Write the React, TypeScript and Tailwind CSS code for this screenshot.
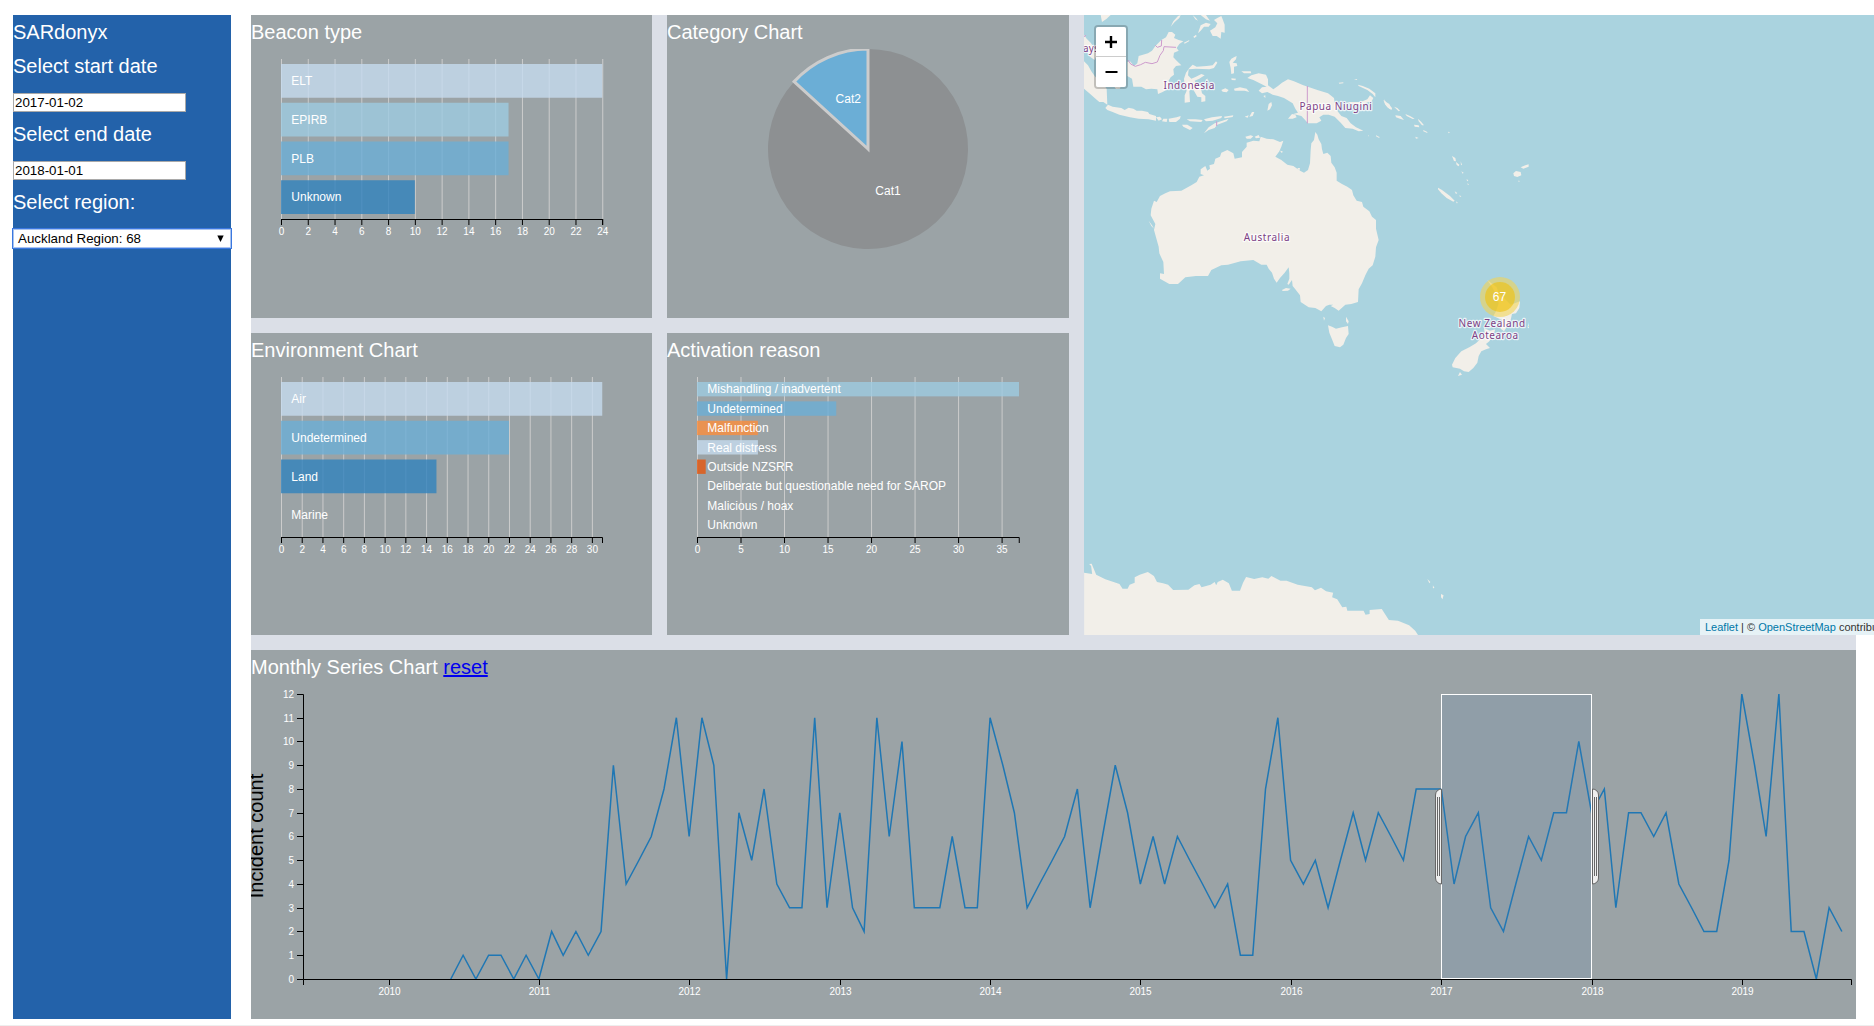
import React from "react";

type Row = { label: string; value: number; color: string };

const FONT = "font-['Liberation_Sans',Arial,sans-serif]";

function Title({ children }: { children: React.ReactNode }) {
  return <div className="h-[34px] pt-[3px] text-xl leading-7 whitespace-nowrap text-white">{children}</div>;
}

function Panel({ title, className, children }: { title: React.ReactNode; className?: string; children: React.ReactNode }) {
  return (
    <section className={"overflow-hidden bg-[#9ba3a6] " + (className ?? "")}>
      <Title>{title}</Title>
      {children}
    </section>
  );
}

function RowChart({ rows, max, step, width = 321.25 }: { rows: Row[]; max: number; step: number; width?: number }) {
  const height = 160;
  const gap = 5;
  const rowHeight = (height - gap * (rows.length + 1)) / rows.length;
  const ticks: number[] = [];
  for (let t = 0; t <= max; t += step) ticks.push(t);
  const x = (v: number) => (v / max) * width;
  return (
    <svg width="401" height="200" className="block">
      <g transform="translate(30,10)">
        {ticks.map((t) => (
          <g key={t} transform={`translate(${x(t) + 0.5},${height})`}>
            <line y2="6" stroke="#000" />
            <line y2={-height} stroke="#ccc" />
            <text y="16.3" textAnchor="middle" fontSize="10" fill="#fff">{t}</text>
          </g>
        ))}
        <path d={`M0.5,166V160.5H${width + 0.25}V166`} fill="none" stroke="#000" />
        {rows.map((r, i) => (
          <g key={r.label} transform={`translate(0,${gap + i * (rowHeight + gap)})`}>
            <rect width={x(r.value)} height={rowHeight} fill={r.color} fillOpacity="0.8" />
            <text x="10.3" y={rowHeight / 2 + 4.2} fontSize="12" fill="#fff">{r.label}</text>
          </g>
        ))}
      </g>
    </svg>
  );
}

function PieChart() {
  const a = (9 / 68) * Math.PI * 2;
  const px = 201 - 100 * Math.sin(a);
  const py = 100 - 100 * Math.cos(a);
  return (
    <svg width="402" height="200" className="block">
      <path d={`M201,100V0A100,100 0 1 1 ${px},${py}Z`} fill="#8d9092" />
      <path d={`M201,100L${px},${py}A100,100 0 0 1 201,0Z`} fill="#6baed6" stroke="#ccc" strokeWidth="3" />
      <text x="221" y="145.7" textAnchor="middle" fontSize="12" fill="#fff">Cat1</text>
      <text x="181.3" y="54.3" textAnchor="middle" fontSize="12" fill="#fff">Cat2</text>
    </svg>
  );
}

/* Monthly incident counts, June 2010 to September 2019. */
const SERIES = [
  0, 1, 0, 1, 1, 0, 1,
  0, 2, 1, 2, 1, 2, 9, 4, 5, 6, 8, 11,
  6, 11, 9, 0, 7, 5, 8, 4, 3, 3, 11, 3,
  7, 3, 2, 11, 6, 10, 3, 3, 3, 6, 3, 3,
  11, 9, 7, 3, 4, 5, 6, 8, 3, 6, 9, 7,
  4, 6, 4, 6, 5, 4, 3, 4, 1, 1, 8, 11,
  5, 4, 5, 3, 5, 7, 5, 7, 6, 5, 8, 8,
  8, 4, 6, 7, 3, 2, 4, 6, 5, 7, 7, 10,
  7, 8, 3, 7, 7, 6, 7, 4, 3, 2, 2, 5,
  12, 9, 6, 12, 2, 2, 0, 3, 2,
];

const DAY = 86400000;
const timeX = (year: number, month: number) =>
  85.6 + ((Date.UTC(year, month, 1) - Date.UTC(2010, 0, 1)) / DAY) * 0.41169;

function Handle({ x, side }: { x: number; side: 1 | -1 }) {
  const s = side;
  return (
    <path
      transform={`translate(${x},0)`}
      d={`M${0.5 * s},95A6,6 0 0 ${s === 1 ? 1 : 0} ${6.5 * s},101V184A6,6 0 0 ${s === 1 ? 1 : 0} ${0.5 * s},190ZM${2.5 * s},103V182M${4.5 * s},103V182`}
      fill="#eee"
      stroke="#666"
    />
  );
}

function SeriesChart() {
  const y = (v: number) => 285 - v * 23.75;
  const points = SERIES.map((v, i) => `${timeX(2010, 5 + i).toFixed(2)},${y(v)}`).join(" ");
  return (
    <svg width="1605" height="335" className="block">
      <text transform="translate(12,152) rotate(-90)" textAnchor="middle" fontSize="20" fill="#000">Incident count</text>
      <g transform="translate(52,10)">
        <path d="M-6,0.5H0.5V285.5H-6" fill="none" stroke="#000" />
        {Array.from({ length: 13 }, (_, v) => (
          <g key={v} transform={`translate(0,${Math.round(y(v) - 0.01) + 0.5})`}>
            <line x2="-6" stroke="#000" />
            <text x="-9" y="3.5" textAnchor="end" fontSize="10" fill="#fff">{v}</text>
          </g>
        ))}
        <path d="M0.5,291V285.5H1548.5V291" fill="none" stroke="#000" />
        {Array.from({ length: 10 }, (_, i) => (
          <g key={i} transform={`translate(${Math.round(timeX(2010 + i, 0)) + 0.5},285)`}>
            <line y2="6" stroke="#000" />
            <text y="16.3" textAnchor="middle" fontSize="10" fill="#fff">{2010 + i}</text>
          </g>
        ))}
        <clipPath id="plot"><rect width="1549" height="285" /></clipPath>
        <polyline clipPath="url(#plot)" points={points} fill="none" stroke="#1f77b4" strokeWidth="1.5" />
        <rect x="1138.5" y="0.5" width="150" height="284" fill="#4682b4" fillOpacity="0.125" stroke="#fff" />
        <Handle x={1139} side={-1} />
        <Handle x={1289} side={1} />
      </g>
    </svg>
  );
}

function Label({ x, y, w, children }: { x: number; y: number; w: number; children: string }) {
  return (
    <text x={x} y={y} textLength={w} fontSize="10" fontFamily="Noto Sans, sans-serif" fill="#7d3f85"
      stroke="#fff" strokeOpacity="0.75" strokeWidth="2.4" strokeLinejoin="round" paintOrder="stroke">
      {children}
    </text>
  );
}

function MapView() {
  return (
    <div className="relative h-[620px] w-[790px] overflow-hidden bg-[#aad3df]">
      <svg width="790" height="620" className="block" fill="#f2efe9">
        <g transform="translate(-4,-5) scale(0.33333)">
          {/* Malay peninsula and Sumatra */}
          <path d="M12,74L20,86L32,98L42,112L50,136L44,150L30,140L20,120L12,110Z" />
          <path d="M12,154L24,166L34,184L44,198L58,214L72,226L80,236L82,284L70,276L58,276L44,264L28,250L12,236Z" />
          <path d="M104,232L112,226L122,228L120,236L108,237ZM62,15H92L80,26L66,36Z" />
          {/* Java */}
          <path d="M76,294L84,284L98,290L124,294L134,300L146,293L160,296L170,302L186,302L204,306L208,312L228,318V332L206,328L176,326L150,322L118,314L98,306L82,300Z" />
          <path d="M228,322L240,320L246,328L236,332ZM250,326L262,326L260,336L246,334ZM266,326L290,322L302,318L300,326L288,336L268,336ZM306,344L322,344L338,354L330,360L310,350ZM320,328L346,328L368,330L364,336L330,334ZM372,328L396,322L426,318L424,324L398,332L378,334ZM372,370L386,352L404,340L446,326L440,334L412,344L404,354L386,360ZM432,320L460,316L458,321L434,325ZM508,320L516,306L523,306L518,318ZM494,320L506,316L503,323Z" />
          {/* Borneo */}
          <path d="M142,156L150,154L162,168L172,160L176,138L204,130L216,122L226,108L244,90L258,82L266,66L276,66L286,74L282,84L296,90L310,94L298,102L290,114L296,122L282,128L280,142L290,152L304,166L288,168L280,178L282,194L272,202L266,212L272,226L262,238L248,246L234,252L232,238L214,236L198,238L184,230L160,230L156,206L142,198Z" />
          {/* Philippines */}
          <path d="M272,50L280,34L294,18L302,15L298,24L284,36ZM354,70L362,46L378,38L392,42L386,50L372,50L362,62ZM390,62L406,52L412,40L402,30L412,24L424,18L428,28L434,44L434,68L424,66L422,86L410,78L398,78ZM338,15L348,24L354,32L346,28ZM362,15L378,28L390,32L384,24L378,15ZM312,98L328,90L327,94L314,101ZM340,80L348,74L350,79L343,84Z" />
          {/* Sulawesi */}
          <path d="M312,206L318,188L328,174L338,164L350,170L380,168L398,166L408,154L412,158L402,174L388,178L348,176L326,178L324,196L334,206L348,200L364,192L374,196L358,206L344,212L348,220L362,230L366,250L376,258L376,274L364,276L364,262L352,260L344,246L338,236L328,242L330,276L314,278L314,256L320,242L314,228Z" />
          {/* Maluku */}
          <path d="M448,156L454,146L462,142L470,138L468,148L458,158L470,160L472,168L462,170L462,190L454,192L452,174ZM424,240L436,235L446,240L440,247L428,245ZM462,236L480,232L500,236L508,246L494,242L476,242L464,242ZM454,205L468,206L466,211L455,210ZM484,184L512,184L514,190L492,190ZM562,302L566,282L574,276L576,286L570,298ZM376,208L384,206L382,211ZM550,258L556,256L556,264Z" />
          {/* New Guinea */}
          <path d="M502,204L514,196L536,190L558,194L564,208L564,226L580,238L594,228L606,218L624,208L642,214L670,226L712,240L744,250L762,264L764,278L778,282L770,300L784,318L800,324L812,340L828,352L850,362L836,364L818,356L796,354L782,338L764,320L746,314L730,314L718,322L724,332L710,340L684,340L672,326L664,318L640,312L654,308L646,296L638,280L612,264L594,258L578,254L562,246L546,250L536,242L546,232L560,230L544,222L520,210ZM624,326L636,312L646,314L650,322L638,326Z" />
          <path d="M800,276L820,276L842,276L862,268L870,256L880,264L876,272L860,278L844,286L816,282ZM834,224L848,228L868,236L886,250L886,262L878,252L862,240L836,228ZM776,218L790,217L790,220L778,221ZM822,208L832,207L830,210ZM912,268L918,276L928,282L936,298L928,296L916,284ZM942,290L952,294L960,302L956,304ZM946,316L962,318L972,330L960,326L948,322ZM976,312L990,318L1004,326L998,327L980,318ZM1002,344L1016,346L1018,352L1004,350ZM1014,326L1024,336L1032,346L1026,346L1016,334ZM1030,360L1042,366L1042,369L1030,364ZM888,376L900,382L896,383L888,379ZM1006,380L1016,384L1008,386ZM864,376L868,378L865,379Z" />
          {/* Melanesia */}
          <path d="M1104,365L1110,367L1106,370ZM1116,438L1126,444L1128,454L1122,453ZM1128,456L1138,464L1136,469L1130,465ZM1142,454L1146,464L1143,466ZM1144,484L1151,488L1148,491ZM1160,506L1165,512L1161,514ZM1163,519L1167,525L1163,524ZM1074,533L1086,540L1110,558L1124,572L1120,575L1100,564L1084,550L1074,538ZM1124,544L1132,549L1128,552ZM1138,556L1144,559L1140,561ZM1128,574L1134,579L1130,580Z" />
          {/* Australia */}
          <path d="M706,366L712,374L716,388L724,402L726,418L730,432L742,428L752,438L754,458L764,472L770,488L770,512L786,522L802,530L816,540L820,556L830,572L846,576L850,590L868,604L876,620L888,630L888,656L896,690L888,712L886,740L878,766L866,776L856,796L846,820L836,838L834,876L814,882L796,884L776,902L764,894L752,888L760,884L748,884L738,888L724,904L706,894L686,892L662,876L660,856L646,838L638,828L636,810L626,824L622,822L628,806L628,790L626,772L614,788L600,804L590,818L582,806L576,788L566,776L560,764L544,764L520,750L482,754L444,764L424,766L394,780L384,798L348,798L316,802L294,822L268,822L240,806L240,790L252,792L250,756L238,730L236,710L228,682L222,660L226,642L212,616L214,596L222,572L230,576L240,558L256,550L270,544L304,542L334,526L350,516L358,500L372,496L362,492L362,478L376,468L382,482L390,476L388,466L402,462L406,446L420,440L424,428L442,420L460,430L464,446L486,442L486,426L500,410L500,398L520,392L538,394L542,380L560,386L580,388L600,396L610,392L604,410L598,424L586,440L604,450L622,464L640,468L660,482L672,488L684,480L690,460L692,420L694,400L702,390Z" />
          <path d="M496,380L512,376L520,379L512,386L500,386ZM524,380L536,375L540,383L528,385ZM606,840L618,834L632,836L624,842L608,843ZM730,920L735,924L732,932ZM798,920L806,934L804,942L798,934ZM744,946L756,950L768,956L786,952L804,948L806,972L798,984L790,1004L780,1012L764,1008L756,988L748,968ZM652,474L660,474L658,484ZM600,422L608,424L606,430ZM206,632L214,648L222,656L216,646Z" />
          <path
            d="M144,150L152,162L166,169L182,164L196,157L216,161L232,156L240,136L250,122L252,110L288,112M226,106L232,112L244,108L245,90M12,80L18,76M410,334V348M682,228V340"
            fill="none"
            stroke="#cd9bcd"
            strokeWidth="3"
          />
        </g>
        <g transform="translate(296,85) scale(0.33333)">
          {/* New Zealand and Fiji */}
          <path d="M322,540L332,548L350,562L356,580L378,600L392,614L420,604L418,624L408,640L396,642L392,660L384,676L372,694L362,686L366,660L340,648L348,634L356,610L350,586L336,560Z" />
          <path d="M312,684L330,692L346,688L340,704L328,724L318,732L330,744L318,748L304,754L296,768L292,788L280,804L266,816L252,814L240,806L218,802L216,794L226,774L244,754L268,742L288,730L304,714L314,700ZM234,828L240,816L246,824ZM400,220L408,213L422,216L424,226L412,231L402,228ZM422,202L436,196L446,193L446,200L430,206ZM414,242L421,243L416,245Z" />
          <path d="M10,0L26,14L36,24L34,30L22,22L14,10Z" />
        </g>
        <g transform="translate(-4,515) scale(0.50632,0.33333)">
          {/* Antarctica */}
          <path d="M8,128L24,132L22,108L18,102L23,101L32,134L50,148L78,162L84,176L94,176L98,164L108,158L108,142L118,134L134,126L146,138L152,156L164,160L174,164L184,180L214,179L226,166L236,162L240,172L258,164L266,156L269,166L272,156L282,149L294,160L300,182L316,182L322,158L328,141L344,147L360,142L372,146L378,138L396,152L408,152L430,164L458,172L464,181L476,173L486,184L500,188L498,202L508,208L518,232L526,230L528,242L546,242L560,242L564,254L572,252L572,240L596,237L610,270L628,272L650,286L662,302L668,316H8ZM686,147L692,156L690,160ZM697,166L700,174L697,175ZM713,192L718,196L716,208L713,202Z" />
        </g>
        <Label x={79.5} y={74} w={50.8}>Indonesia</Label>
        <Label x={215.5} y={95.3} w={72.3}>Papua Niugini</Label>
        <Label x={159.8} y={226.2} w={45.7}>Australia</Label>
        <Label x={-1} y={37.3} w={16}>ays</Label>
        <clipPath id="tile"><rect width="445" height="620" /></clipPath>
        <g clipPath="url(#tile)">
          <Label x={374.5} y={312.4} w={74}>New Zealand /</Label>
          <Label x={387.8} y={324.2} w={46.4}>Aotearoa</Label>
        </g>
      </svg>

      <div className="absolute top-[262px] left-[396px] size-10 rounded-full bg-[#f1d357]/60 p-[5px]">
        <div className="size-[30px] rounded-full bg-[#f0c20c]/60 pr-px text-center text-xs leading-[30px] text-white">67</div>
      </div>

      <div className="absolute top-[10px] left-[10px] w-[34px] overflow-hidden rounded border-2 border-black/20 bg-clip-padding">
        <button className="block h-[30px] w-full border-b border-[#ccc] bg-white">
          <svg width="30" height="29" className="block" stroke="#000" strokeWidth="2.4"><path d="M9,15H21M15,9V21" /></svg>
        </button>
        <button className="block h-[30px] w-full bg-white">
          <svg width="30" height="30" className="block" stroke="#000" strokeWidth="2.2"><path d="M9.5,15H21.5" /></svg>
        </button>
      </div>

      <div className="absolute top-[604px] left-[616px] h-4 bg-white/70 px-[5px] text-[11px] leading-4 whitespace-nowrap text-[#333]">
        <a className="text-[#0078a8]">Leaflet</a> | © <a className="text-[#0078a8]">OpenStreetMap</a> contributors
      </div>
    </div>
  );
}

function DateField({ label, value }: { label: string; value: string }) {
  return (
    <div className="mb-[5px]">
      <Title>{label}</Title>
      <input
        readOnly
        value={value}
        className="mt-[10px] block h-[19px] w-[173px] border border-[#a9a9a9] bg-white px-px text-[13.33px] leading-[17px] text-black outline-none"
      />
    </div>
  );
}

export default function App() {
  return (
    <div className={"flex h-[1026px] w-full flex-col justify-between overflow-hidden bg-white pt-[15px] " + FONT}>
      <div className="flex h-[1004px] shrink-0 gap-5 pl-[13px]">
        <aside className="w-[218px] shrink-0 bg-[#2362aa]">
          <Title>SARdonyx</Title>
          <DateField label="Select start date" value="2017-01-02" />
          <DateField label="Select end date" value="2018-01-01" />
          <Title>Select region:</Title>
          <div className="mt-[10px] flex h-[19px] items-center justify-between border border-[#a9c3ee] bg-white pr-[6px] pl-1 text-[13.33px] leading-[17px] text-black ring-1 ring-[#3b78e0]">
            <span>Auckland Region: 68</span>
            <svg width="7" height="7" className="mb-px"><path d="M0.3,0.5H6.7L3.5,7Z" /></svg>
          </div>
        </aside>

        <main className="grid w-[1605px] shrink-0 grid-cols-[401px_402px_772px] grid-rows-[303px_302px_369px] gap-[15px] bg-[#dbdfe7]">
          <Panel title="Beacon type">
            <RowChart
              max={24}
              step={2}
              rows={[
                { label: "ELT", value: 24, color: "#c6dbef" },
                { label: "EPIRB", value: 17, color: "#9ecae1" },
                { label: "PLB", value: 17, color: "#6baed6" },
                { label: "Unknown", value: 10, color: "#3182bd" },
              ]}
            />
          </Panel>
          <Panel title="Category Chart">
            <PieChart />
          </Panel>
          <div className="row-span-2">
            <MapView />
          </div>
          <Panel title="Environment Chart">
            <RowChart
              max={31}
              step={2}
              rows={[
                { label: "Air", value: 31, color: "#c6dbef" },
                { label: "Undetermined", value: 22, color: "#6baed6" },
                { label: "Land", value: 15, color: "#3182bd" },
                { label: "Marine", value: 0, color: "#9ecae1" },
              ]}
            />
          </Panel>
          <Panel title="Activation reason">
            <RowChart
              width={322}
              max={37}
              step={5}
              rows={[
                { label: "Mishandling / inadvertent", value: 37, color: "#9ecae1" },
                { label: "Undetermined", value: 16, color: "#6baed6" },
                { label: "Malfunction", value: 7, color: "#fd8d3c" },
                { label: "Real distress", value: 7, color: "#c6dbef" },
                { label: "Outside NZSRR", value: 1, color: "#e6550d" },
                { label: "Deliberate but questionable need for SAROP", value: 0, color: "#3182bd" },
                { label: "Malicious / hoax", value: 0, color: "#3182bd" },
                { label: "Unknown", value: 0, color: "#3182bd" },
              ]}
            />
          </Panel>
          <Panel
            className="col-span-3"
            title={<>Monthly Series Chart <a className="text-[#0000ee] underline">reset</a></>}
          >
            <SeriesChart />
          </Panel>
        </main>
      </div>
      <div className="h-px shrink-0 bg-[#eeeeee]" />
    </div>
  );
}
